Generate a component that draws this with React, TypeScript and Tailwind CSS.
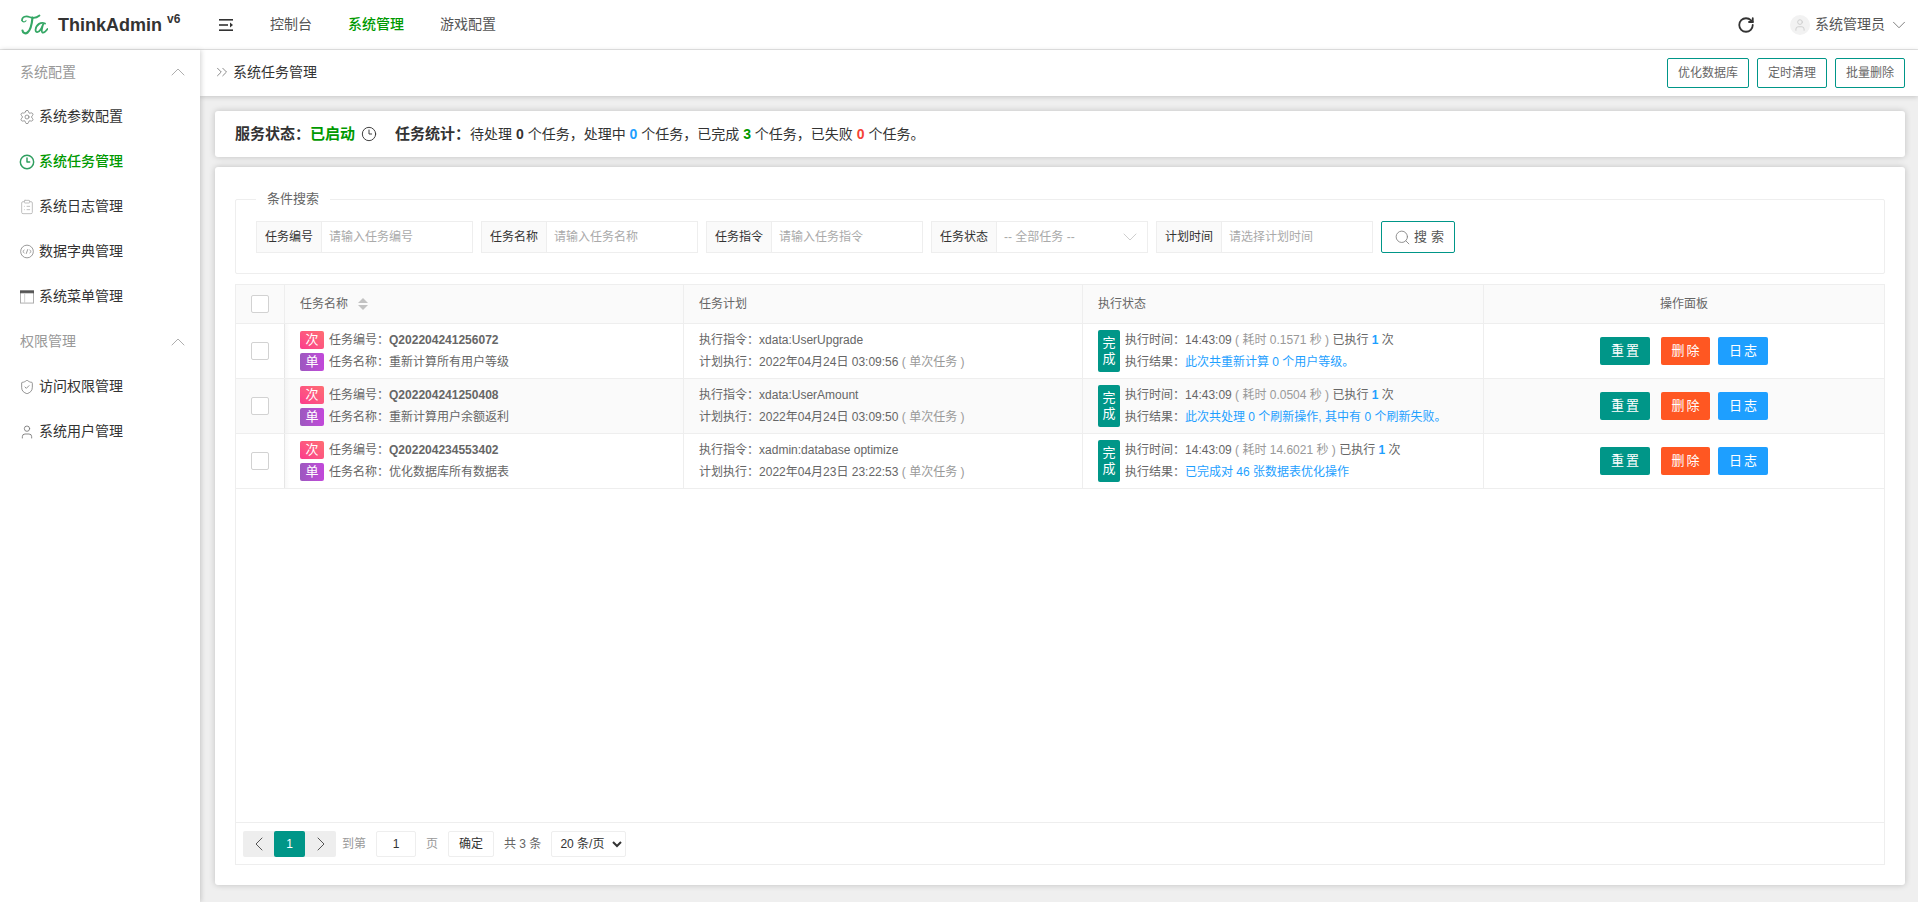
import React from 'react';
import { ChevronDown, ChevronLeft, ChevronRight, ChevronUp, ChevronsRight, Clock3, RotateCw, Search, Settings, ShieldCheck, User, ClipboardList } from 'lucide-react';

const FONT = '[font-family:Arial,"Liberation_Sans","Noto_Sans_CJK_SC",sans-serif]';

// full-width punctuation
const COLON = '\uFF1A';
const COMMA = '\uFF0C';

const navItems = ['控制台', '系统管理', '游戏配置'];

const Logo = () => (
  <svg width="27" height="21" viewBox="0 0 27 21" fill="none" stroke="#35a765" strokeLinecap="round">
    <path d="M1 6.5C0.8 2.8 5 1.5 8.5 3C11.5 4.2 15 4.5 18.5 1.5" strokeWidth="1.7" />
    <path d="M1 6.5C1.6 8.4 4 8.4 5 6.8" strokeWidth="1.2" />
    <path d="M11.5 3.5C11 9 9.8 16 6.5 18.5C4.5 20 1.8 19.2 1.5 16.5" strokeWidth="2.2" />
    <path d="M24 9.5C20 7.5 15.2 10.5 14.6 15.5C14.3 18.8 17.5 19.2 20 15L22.5 9.5C21 13 20 18 21.5 18.6C23 19 25 17.2 26.5 15" strokeWidth="1.8" />
  </svg>
);

const ShrinkIcon = () => (
  <svg width="14" height="12" viewBox="0 0 14 12" fill="#333">
    <rect x="0" y="0" width="14" height="1.6" />
    <rect x="0" y="5.2" width="9" height="1.6" />
    <path d="M11 3.4L14 6L11 8.6Z" />
    <rect x="0" y="10.4" width="14" height="1.6" />
  </svg>
);

const DictIcon = () => (
  <svg width="15" height="15" viewBox="0 0 15 15" fill="none" stroke="#888" strokeWidth="0.9">
    <circle cx="7.5" cy="7.5" r="6.8" />
    <path d="M4.8 5.8L3 7.5L4.8 9.2M10.2 5.8L12 7.5L10.2 9.2M8.4 5L6.6 10" />
  </svg>
);

const WindowIcon = () => (
  <svg width="15" height="14" viewBox="0 0 15 14" fill="none">
    <rect x="0.5" y="0.5" width="14" height="13" stroke="#aaa" />
    <rect x="0.5" y="0.5" width="14" height="2" fill="#555" stroke="#555" />
    <path d="M5 3V13.5" stroke="#ccc" />
  </svg>
);

const SideGroup = ({ label, first }: { label: string; first?: boolean }) => (
  <div className={`${first ? 'h-[44px]' : 'h-[45px]'} pl-5 pr-[10px] flex items-center justify-between text-[14px] text-[#999]`}>
    <span>{label}</span>
    <ChevronUp className="w-[24px] h-[24px] text-[#999]" strokeWidth={0.8} />
  </div>
);

const SideItem = ({ icon, label, active }: { icon: React.ReactNode; label: string; active?: boolean }) => (
  <div className={`h-[45px] pl-5 flex items-center gap-[5px] text-[14px] ${active ? 'text-[#090] font-medium' : 'text-[#333]'}`}>
    <span className={`w-[14px] h-[14px] flex items-center justify-center ${active ? 'text-[#2f9e5f]' : 'text-[#777]'}`}>{icon}</span>
    <span>{label}</span>
  </div>
);

const ToolButton = ({ label }: { label: string }) => (
  <button className="h-[30px] px-[10px] bg-white border border-[#009688] rounded-[2px] text-[12px] text-[#666]">{label}</button>
);

const Field = ({ label, placeholder, select }: { label: string; placeholder: string; select?: boolean }) => (
  <div className="w-[217px] h-[32px] flex border border-[#eee] text-[12px] shrink-0">
    <div className="w-[65px] shrink-0 bg-[#fafafa] border-r border-[#eee] flex items-center justify-center text-[#333]">{label}</div>
    <div className="flex-1 flex items-center justify-between pl-[7px] pr-[5px] text-[#aaa]">
      <span>{placeholder}</span>
      {select && <ChevronDown className="w-[24px] h-[24px] text-[#c2c2c2]" strokeWidth={0.8} />}
    </div>
  </div>
);

const Checkbox = () => <div className="w-[18px] h-[18px] bg-white border border-[#d2d2d2] rounded-[2px]"></div>;

const ROW_GRID = 'grid grid-cols-[49px_399px_399px_401px_1fr]';

const tasks = [
  {
    code: 'Q202204241256072',
    name: '重新计算所有用户等级',
    command: 'xdata:UserUpgrade',
    plan: '2022年04月24日 03:09:56',
    cost: '0.1571',
    result: '此次共重新计算 0 个用户等级。',
  },
  {
    code: 'Q202204241250408',
    name: '重新计算用户余额返利',
    command: 'xdata:UserAmount',
    plan: '2022年04月24日 03:09:50',
    cost: '0.0504',
    result: '此次共处理 0 个刷新操作, 其中有 0 个刷新失败。',
  },
  {
    code: 'Q202204234553402',
    name: '优化数据库所有数据表',
    command: 'xadmin:database optimize',
    plan: '2022年04月23日 23:22:53',
    cost: '14.6021',
    result: '已完成对 46 张数据表优化操作',
  },
];

const RowButton = ({ label, color, width }: { label: string; color: string; width: string }) => (
  <button className={`${width} ${color} h-[28px] pl-[2px] rounded-[2px] text-[13px] text-white tracking-[2px]`}>{label}</button>
);

const Badge = ({ label, color }: { label: string; color: string }) => (
  <span className={`${color} w-[24px] h-[18px] rounded-[2px] text-white text-[13px] leading-[18px] text-center shrink-0`}>{label}</span>
);

const TaskRow = ({ task, even }: { task: (typeof tasks)[number]; even: boolean }) => (
  <div className={`${ROW_GRID} h-[55px] border-b border-[#eee] text-[12px] text-[#666] ${even ? 'bg-[#fafafa]' : 'bg-white'}`}>
    <div className="relative flex items-center justify-center border-r border-[#eee]">
      <Checkbox />
      <div className="absolute left-full top-0 w-[6px] h-full bg-gradient-to-r from-[#00000009] to-transparent"></div>
    </div>
    <div className="border-r border-[#eee] pl-[15px] flex flex-col justify-center gap-1">
      <div className="flex items-center gap-[5px] h-[18px]">
        <Badge label="次" color="bg-gradient-to-tr from-[#fb3a8c] to-[#ff6d72]" />
        <span>任务编号{COLON}<b className="font-bold">{task.code}</b></span>
      </div>
      <div className="flex items-center gap-[5px] h-[18px]">
        <Badge label="单" color="bg-gradient-to-r from-[#9c58bf] to-[#c248da]" />
        <span>任务名称{COLON}{task.name}</span>
      </div>
    </div>
    <div className="border-r border-[#eee] pl-[15px] flex flex-col justify-center gap-1">
      <div className="h-[18px] leading-[18px]">执行指令{COLON}{task.command}</div>
      <div className="h-[18px] leading-[18px]">计划执行{COLON}{task.plan} <span className="text-[#999]">( 单次任务 )</span></div>
    </div>
    <div className="border-r border-[#eee] pl-[15px] flex items-center gap-[5px]">
      <div className="w-[22px] h-[42px] bg-[#009688] rounded-[2px] text-white text-[13px] text-center leading-[16px] py-[5px] shrink-0">完<br />成</div>
      <div className="flex flex-col gap-1">
        <div className="h-[18px] leading-[18px]">
          执行时间{COLON}14:43:09 <span className="text-[#999]">( 耗时 {task.cost} 秒 )</span> 已执行 <b className="text-[#1e9fff]">1</b> 次
        </div>
        <div className="h-[18px] leading-[18px]">执行结果{COLON}<span className="text-[#1e9fff]">{task.result}</span></div>
      </div>
    </div>
    <div className="flex items-center justify-center">
      <RowButton label="重置" color="bg-[#009688]" width="w-[50px]" />
      <div className="w-[11px]"></div>
      <RowButton label="删除" color="bg-[#ff5722]" width="w-[49px]" />
      <div className="w-[8px]"></div>
      <RowButton label="日志" color="bg-[#1e9fff]" width="w-[50px]" />
    </div>
  </div>
);

export default function App() {
  return (
    <div className={`${FONT} w-full h-[902px] flex flex-col bg-[#efefef] overflow-hidden`}>
      <header className="h-[50px] shrink-0 bg-white border-b border-[#e6e6e6] flex items-center">
        <div className="w-[200px] shrink-0 pl-[21px] flex items-center">
          <Logo />
          <span className="ml-[10px] text-[18px] font-bold text-[#333] leading-none">ThinkAdmin</span>
          <sup className="ml-[5px] text-[12px] font-bold text-[#333] -top-[6px]">v6</sup>
        </div>
        <div className="ml-[19px]"><ShrinkIcon /></div>
        <nav className="ml-[37px] flex gap-[36px] text-[14px] text-[#555]">
          {navItems.map(n => (
            <span key={n} className={n === '系统管理' ? 'text-[#090] font-medium' : ''}>{n}</span>
          ))}
        </nav>
        <div className="ml-auto flex items-center pr-[8px]">
          <RotateCw className="w-[18px] h-[18px] text-[#333]" strokeWidth={2.4} />
          <div className="ml-[35px] w-[20px] h-[20px] rounded-full bg-[#f2f2f2] flex items-center justify-center">
            <User className="w-[14px] h-[14px] text-[#ccc]" strokeWidth={1.6} />
          </div>
          <span className="ml-[5px] text-[14px] text-[#555]">系统管理员</span>
          <ChevronDown className="ml-[3px] w-[22px] h-[22px] text-[#666]" strokeWidth={0.9} />
        </div>
      </header>

      <div className="flex-1 flex min-h-0">
        <aside className="w-[200px] shrink-0 bg-white shadow-[1px_0_5px_rgba(0,0,0,0.18)] z-10">
          <SideGroup first label="系统配置" />
          <SideItem icon={<Settings className="w-[16px] h-[16px] shrink-0" strokeWidth={1.1} />} label="系统参数配置" />
          <SideItem active icon={<Clock3 className="w-[16px] h-[16px] shrink-0" strokeWidth={2.2} />} label="系统任务管理" />
          <SideItem icon={<ClipboardList className="w-[16px] h-[16px] shrink-0 text-[#bbb]" strokeWidth={1.4} />} label="系统日志管理" />
          <SideItem icon={<DictIcon />} label="数据字典管理" />
          <SideItem icon={<WindowIcon />} label="系统菜单管理" />
          <SideGroup label="权限管理" />
          <SideItem icon={<ShieldCheck className="w-[16px] h-[16px] shrink-0" strokeWidth={1.2} />} label="访问权限管理" />
          <SideItem icon={<User className="w-[16px] h-[16px] shrink-0" strokeWidth={1.3} />} label="系统用户管理" />
        </aside>

        <main className="flex-1 min-w-0 flex flex-col">
          <div className="h-[46px] shrink-0 bg-white shadow-[0_1px_5px_rgba(0,0,0,0.18)] pl-[13px] pr-[13px] flex items-center justify-between">
            <div className="flex items-center gap-[2px] pb-[2px] text-[14px] text-[#333]">
              <ChevronsRight className="w-[18px] h-[18px] text-[#888]" strokeWidth={1.3} />
              <span>系统任务管理</span>
            </div>
            <div className="flex gap-2">
              <ToolButton label="优化数据库" />
              <ToolButton label="定时清理" />
              <ToolButton label="批量删除" />
            </div>
          </div>

          <div className="flex-1 min-h-0 pt-[15px] pl-[15px] pr-[13px] pb-[17px] flex flex-col gap-[10px]">
            <div className="h-[46px] shrink-0 bg-white rounded-[3px] shadow-[0_0_6px_rgba(0,0,0,0.2)] px-5 flex items-center text-[14px] text-[#333]">
              <b className="font-bold text-[15px]">服务状态{COLON}</b>
              <b className="font-bold text-[15px] text-[#090]">已启动</b>
              <Clock3 className="ml-[6px] w-[16px] h-[16px] text-[#333]" strokeWidth={1.4} />
              <b className="ml-[18px] font-bold text-[15px]">任务统计{COLON}</b>
              <span>
                待处理 <b>0</b> 个任务{COMMA}处理中 <b className="text-[#1e9fff]">0</b> 个任务{COMMA}已完成 <b className="text-[#090]">3</b> 个任务{COMMA}已失败 <b className="text-[#f44336]">0</b> 个任务。
              </span>
            </div>

            <div className="flex-1 min-h-0 bg-white rounded-[3px] shadow-[0_0_6px_rgba(0,0,0,0.2)] px-5 pt-[32px] pb-5 flex flex-col">
              <fieldset className="h-[75px] shrink-0 border border-[#eee] rounded-[2px] relative pt-[21px] pl-[20px]">
                <legend className="absolute -top-[10px] left-[20px] px-[11px] bg-white text-[13px] leading-[18px] text-[#666]">条件搜索</legend>
                <div className="flex gap-2">
                  <Field label="任务编号" placeholder="请输入任务编号" />
                  <Field label="任务名称" placeholder="请输入任务名称" />
                  <Field label="任务指令" placeholder="请输入任务指令" />
                  <Field label="任务状态" placeholder="-- 全部任务 --" select />
                  <Field label="计划时间" placeholder="请选择计划时间" />
                  <button className="w-[74px] h-[32px] pl-[6px] border border-[#009688] rounded-[2px] flex items-center justify-center gap-[3px] text-[13px] text-[#555]">
                    <Search className="w-[17px] h-[17px] text-[#888]" strokeWidth={1.3} />
                    <span className="tracking-[4px]">搜索</span>
                  </button>
                </div>
              </fieldset>

              <div className="mt-[10px] flex-1 min-h-0 border border-[#eee] flex flex-col">
                <div className={`${ROW_GRID} h-[39px] shrink-0 bg-[#fafafa] border-b border-[#eee] text-[12px] text-[#666]`}>
                  <div className="flex items-center justify-center border-r border-[#eee]"><Checkbox /></div>
                  <div className="border-r border-[#eee] pl-[15px] flex items-center gap-[10px]">
                    <span>任务名称</span>
                    <span className="flex flex-col gap-[2px]">
                      <span className="w-0 h-0 border-x-[5px] border-x-transparent border-b-[5px] border-b-[#c2c2c2]"></span>
                      <span className="w-0 h-0 border-x-[5px] border-x-transparent border-t-[5px] border-t-[#c2c2c2]"></span>
                    </span>
                  </div>
                  <div className="border-r border-[#eee] pl-[15px] flex items-center">任务计划</div>
                  <div className="border-r border-[#eee] pl-[15px] flex items-center">执行状态</div>
                  <div className="flex items-center justify-center">操作面板</div>
                </div>
                {tasks.map((t, i) => <TaskRow key={t.code} task={t} even={i === 1} />)}
                <div className="flex-1 min-h-0"></div>
                <div className="h-[42px] shrink-0 border-t border-[#eee] pl-[7px] flex items-center text-[12px] text-[#666]">
                  <div className="h-[26px] flex bg-[#eee] rounded-[2px]">
                    <span className="w-[31px] flex items-center justify-center"><ChevronLeft className="w-[24px] h-[24px] text-[#555]" strokeWidth={1} /></span>
                    <span className="w-[31px] flex items-center justify-center bg-[#009688] rounded-[2px] text-white">1</span>
                    <span className="w-[31px] flex items-center justify-center"><ChevronRight className="w-[24px] h-[24px] text-[#555]" strokeWidth={1} /></span>
                  </div>
                  <span className="ml-[6px] text-[#999]">到第</span>
                  <span className="ml-[10px] w-[40px] h-[26px] border border-[#eee] rounded-[2px] flex items-center justify-center text-[#333]">1</span>
                  <span className="ml-[10px] text-[#999]">页</span>
                  <span className="ml-[10px] w-[46px] h-[26px] border border-[#eee] rounded-[2px] flex items-center justify-center text-[#333]">确定</span>
                  <span className="ml-[10px]">共 3 条</span>
                  <select defaultValue="20" className="ml-[10px] w-[75px] h-[26px] bg-white border border-[#eee] rounded-[2px] text-[12px] text-[#333] pl-1">
                    <option value="20">20 条/页</option>
                    <option value="50">50 条/页</option>
                  </select>
                </div>
              </div>
            </div>
          </div>
        </main>
      </div>
    </div>
  );
}
